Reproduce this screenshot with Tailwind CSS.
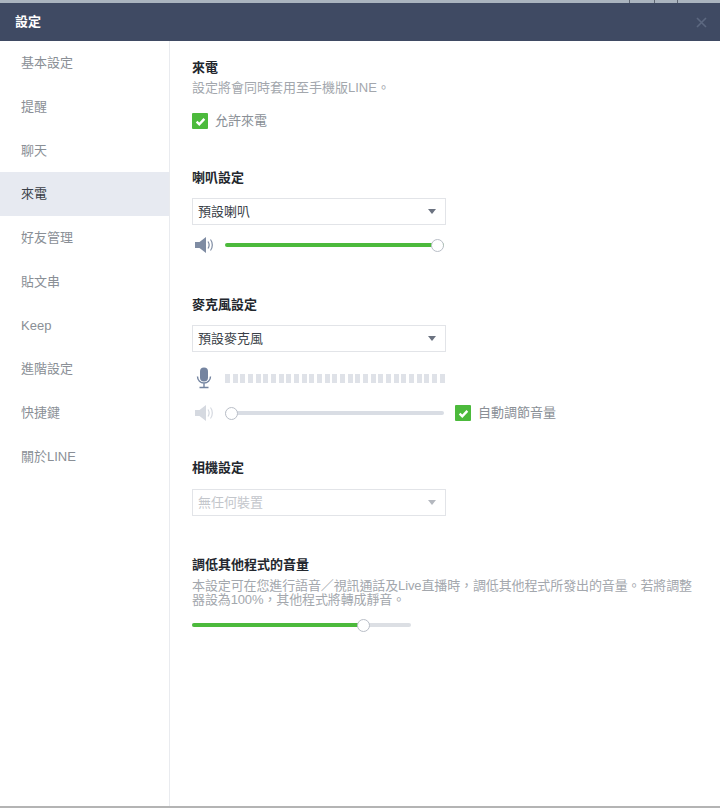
<!DOCTYPE html>
<html lang="zh-Hant">
<head>
    <meta charset="UTF-8">
    <meta name="viewport" content="width=device-width, initial-scale=1.0">
    <title>設定</title>
    <script src="https://cdn.jsdelivr.net/npm/@tailwindcss/browser@4"></script>
</head>
<body class="bg-white font-['Liberation_Sans','Noto_Sans_CJK_TC',sans-serif] text-[13px] leading-[16px] text-[#8a8f96]">
<div class="w-[720px] h-[808px] flex flex-col overflow-hidden">
    <!-- window behind the dialog -->
    <div class="h-[3px] bg-[#aab4bf] flex shrink-0">
        <div class="w-[630px] border-r border-[#5f6773]"></div>
        <div class="w-[25px] border-r border-[#5f6773]"></div>
        <div class="w-[23px] border-r border-[#5f6773]"></div>
    </div>
    <!-- title bar -->
    <div class="h-[38px] bg-[#3f4a63] flex items-center justify-between pl-[15px] pr-[13px] shrink-0">
        <span class="font-bold text-white">設定</span>
        <svg class="w-[11px] h-[11px]" viewBox="0 0 11 11" fill="none" stroke="#5c6880" stroke-width="1.6"><path d="M1 1l9 9M10 1l-9 9"/></svg>
    </div>

    <div class="flex h-[765px] shrink-0">
        <!-- sidebar -->
        <nav class="w-[170px] border-r border-[#e9ebef] shrink-0">
            <div class="h-[43.75px] pl-[21px] pt-[14px]">基本設定</div>
            <div class="h-[43.75px] pl-[21px] pt-[14px]">提醒</div>
            <div class="h-[43.75px] pl-[21px] pt-[14px]">聊天</div>
            <div class="h-[43.75px] pl-[21px] pt-[14px] bg-[#e7eaf1] text-[#3a3f48] w-[169px]">來電</div>
            <div class="h-[43.75px] pl-[21px] pt-[14px]">好友管理</div>
            <div class="h-[43.75px] pl-[21px] pt-[14px]">貼文串</div>
            <div class="h-[43.75px] pl-[21px] pt-[14px]">Keep</div>
            <div class="h-[43.75px] pl-[21px] pt-[14px]">進階設定</div>
            <div class="h-[43.75px] pl-[21px] pt-[14px]">快捷鍵</div>
            <div class="h-[43.75px] pl-[21px] pt-[14px]">關於LINE</div>
        </nav>

        <!-- content -->
        <main class="flex-1 pl-[22px] pt-[19px]">
            <h2 class="font-bold text-[#23272e]">來電</h2>
            <p class="mt-[4px] text-[#a3a7ad]">設定將會同時套用至手機版LINE。</p>
            <label class="mt-[17px] flex items-center gap-[7px] h-[16px]">
                <span class="w-[16px] h-[16px] bg-[#4cba3c] rounded-[1px] flex items-center justify-center">
                    <svg class="w-[11px] h-[11px]" viewBox="0 0 10 10" fill="none" stroke="white" stroke-width="2.2"><path d="M1.5 5.2l2.4 2.4 4.6-5"/></svg>
                </span>
                <span>允許來電</span>
            </label>

            <h2 class="mt-[41px] font-bold text-[#23272e]">喇叭設定</h2>
            <div class="mt-[12px] w-[254px] h-[27px] border border-[#e2e4e8] flex items-center justify-between pl-[5px] pr-[9px] text-[#3a3f48]">
                <span>預設喇叭</span>
                <span class="w-0 h-0 border-x-[4.5px] border-x-transparent border-t-[5px] border-t-[#6b7280]"></span>
            </div>
            <div class="mt-[8px] flex items-center h-[24px]">
                <svg class="w-[19px] h-[18px] ml-[3px] mr-[11px]" viewBox="0 0 19 18" fill="none">
                    <path d="M0 6h4.500l6.500-5v16l-6.500-5H0z" fill="#7f8ca3"/>
                    <path d="M13 5.500c1.300 2 1.300 5 0 7M15.500 3.500c2.400 3 2.400 8 0 11" stroke="#7f8ca3" stroke-width="1.200"/>
                </svg>
                <div class="relative w-[219px] h-[4px] rounded-full bg-[#4cba3c]">
                    <span class="absolute right-[0px] top-[-4px] w-[13px] h-[13px] rounded-full bg-white border border-[#b9bec7]"></span>
                </div>
            </div>

            <h2 class="mt-[40px] font-bold text-[#23272e]">麥克風設定</h2>
            <div class="mt-[12px] w-[254px] h-[27px] border border-[#e2e4e8] flex items-center justify-between pl-[5px] pr-[9px] text-[#3a3f48]">
                <span>預設麥克風</span>
                <span class="w-0 h-0 border-x-[4.5px] border-x-transparent border-t-[5px] border-t-[#6b7280]"></span>
            </div>
            <div class="mt-[14px] flex items-center h-[24px]">
                <svg class="w-[16px] h-[22px] ml-[4px] mr-[13px]" viewBox="0 0 16 22" fill="none">
                    <rect x="4" y="0.5" width="8" height="14" rx="4" fill="#7484a0"/>
                    <path d="M1.500 9.500c0 4 3 6.500 6.500 6.500s6.500-2.500 6.500-6.500M8 16v4M3.500 20.500h9" stroke="#7484a0" stroke-width="1.400"/>
                </svg>
                <div class="w-[220px] flex justify-between">
                    <span class="w-[5px] h-[9px] bg-[#dfe2e8]"></span><span class="w-[5px] h-[9px] bg-[#dfe2e8]"></span><span class="w-[5px] h-[9px] bg-[#dfe2e8]"></span><span class="w-[5px] h-[9px] bg-[#dfe2e8]"></span><span class="w-[5px] h-[9px] bg-[#dfe2e8]"></span><span class="w-[5px] h-[9px] bg-[#dfe2e8]"></span><span class="w-[5px] h-[9px] bg-[#dfe2e8]"></span><span class="w-[5px] h-[9px] bg-[#dfe2e8]"></span><span class="w-[5px] h-[9px] bg-[#dfe2e8]"></span><span class="w-[5px] h-[9px] bg-[#dfe2e8]"></span>
                    <span class="w-[5px] h-[9px] bg-[#dfe2e8]"></span><span class="w-[5px] h-[9px] bg-[#dfe2e8]"></span><span class="w-[5px] h-[9px] bg-[#dfe2e8]"></span><span class="w-[5px] h-[9px] bg-[#dfe2e8]"></span><span class="w-[5px] h-[9px] bg-[#dfe2e8]"></span><span class="w-[5px] h-[9px] bg-[#dfe2e8]"></span><span class="w-[5px] h-[9px] bg-[#dfe2e8]"></span><span class="w-[5px] h-[9px] bg-[#dfe2e8]"></span><span class="w-[5px] h-[9px] bg-[#dfe2e8]"></span><span class="w-[5px] h-[9px] bg-[#dfe2e8]"></span>
                    <span class="w-[5px] h-[9px] bg-[#dfe2e8]"></span><span class="w-[5px] h-[9px] bg-[#dfe2e8]"></span><span class="w-[5px] h-[9px] bg-[#dfe2e8]"></span><span class="w-[5px] h-[9px] bg-[#dfe2e8]"></span><span class="w-[5px] h-[9px] bg-[#dfe2e8]"></span><span class="w-[5px] h-[9px] bg-[#dfe2e8]"></span><span class="w-[5px] h-[9px] bg-[#dfe2e8]"></span><span class="w-[5px] h-[9px] bg-[#dfe2e8]"></span><span class="w-[5px] h-[9px] bg-[#dfe2e8]"></span>
                </div>
            </div>
            <div class="mt-[11px] flex items-center h-[24px]">
                <svg class="w-[19px] h-[18px] ml-[3px] mr-[11px]" viewBox="0 0 19 18" fill="none">
                    <path d="M0 6h4.500l6.500-5v16l-6.500-5H0z" fill="#d5d9e0"/>
                    <path d="M13 5.500c1.300 2 1.300 5 0 7M15.500 3.500c2.400 3 2.400 8 0 11" stroke="#d5d9e0" stroke-width="1.200"/>
                </svg>
                <div class="relative w-[219px] h-[4px] rounded-full bg-[#d9dde4]">
                    <span class="absolute left-0 top-[-4px] w-[13px] h-[13px] rounded-full bg-white border border-[#b9bec7]"></span>
                </div>
                <label class="ml-[11px] flex items-center gap-[7px]">
                    <span class="w-[16px] h-[16px] bg-[#4cba3c] rounded-[1px] flex items-center justify-center">
                        <svg class="w-[11px] h-[11px]" viewBox="0 0 10 10" fill="none" stroke="white" stroke-width="2.2"><path d="M1.5 5.2l2.4 2.4 4.6-5"/></svg>
                    </span>
                    <span>自動調節音量</span>
                </label>
            </div>

            <h2 class="mt-[35px] font-bold text-[#23272e]">相機設定</h2>
            <div class="mt-[13px] w-[254px] h-[27px] border border-[#e2e4e8] flex items-center justify-between pl-[5px] pr-[9px] text-[#c3c6cb]">
                <span>無任何裝置</span>
                <span class="w-0 h-0 border-x-[4.5px] border-x-transparent border-t-[5px] border-t-[#b4b8bf]"></span>
            </div>

            <h2 class="mt-[41px] font-bold text-[#23272e]">調低其他程式的音量</h2>
            <p class="mt-[6px] w-[505px] leading-[14px] tracking-[-0.12px] text-[#a3a7ad]">本設定可在您進行語音／視訊通話及Live直播時，調低其他程式所發出的音量。若將調整器設為100%，其他程式將轉成靜音。</p>
            <div class="mt-[16px] relative w-[219px] h-[4px] rounded-full bg-[#dcdfe4]">
                <div class="w-[172px] h-[4px] rounded-l-full bg-[#4cba3c]"></div>
                <span class="absolute left-[165px] top-[-4px] w-[13px] h-[13px] rounded-full bg-white border border-[#b9bec7]"></span>
            </div>
        </main>
    </div>
    <div class="h-[2px] bg-[#b4b4b4] shrink-0"></div>
</div>
</body>
</html>
